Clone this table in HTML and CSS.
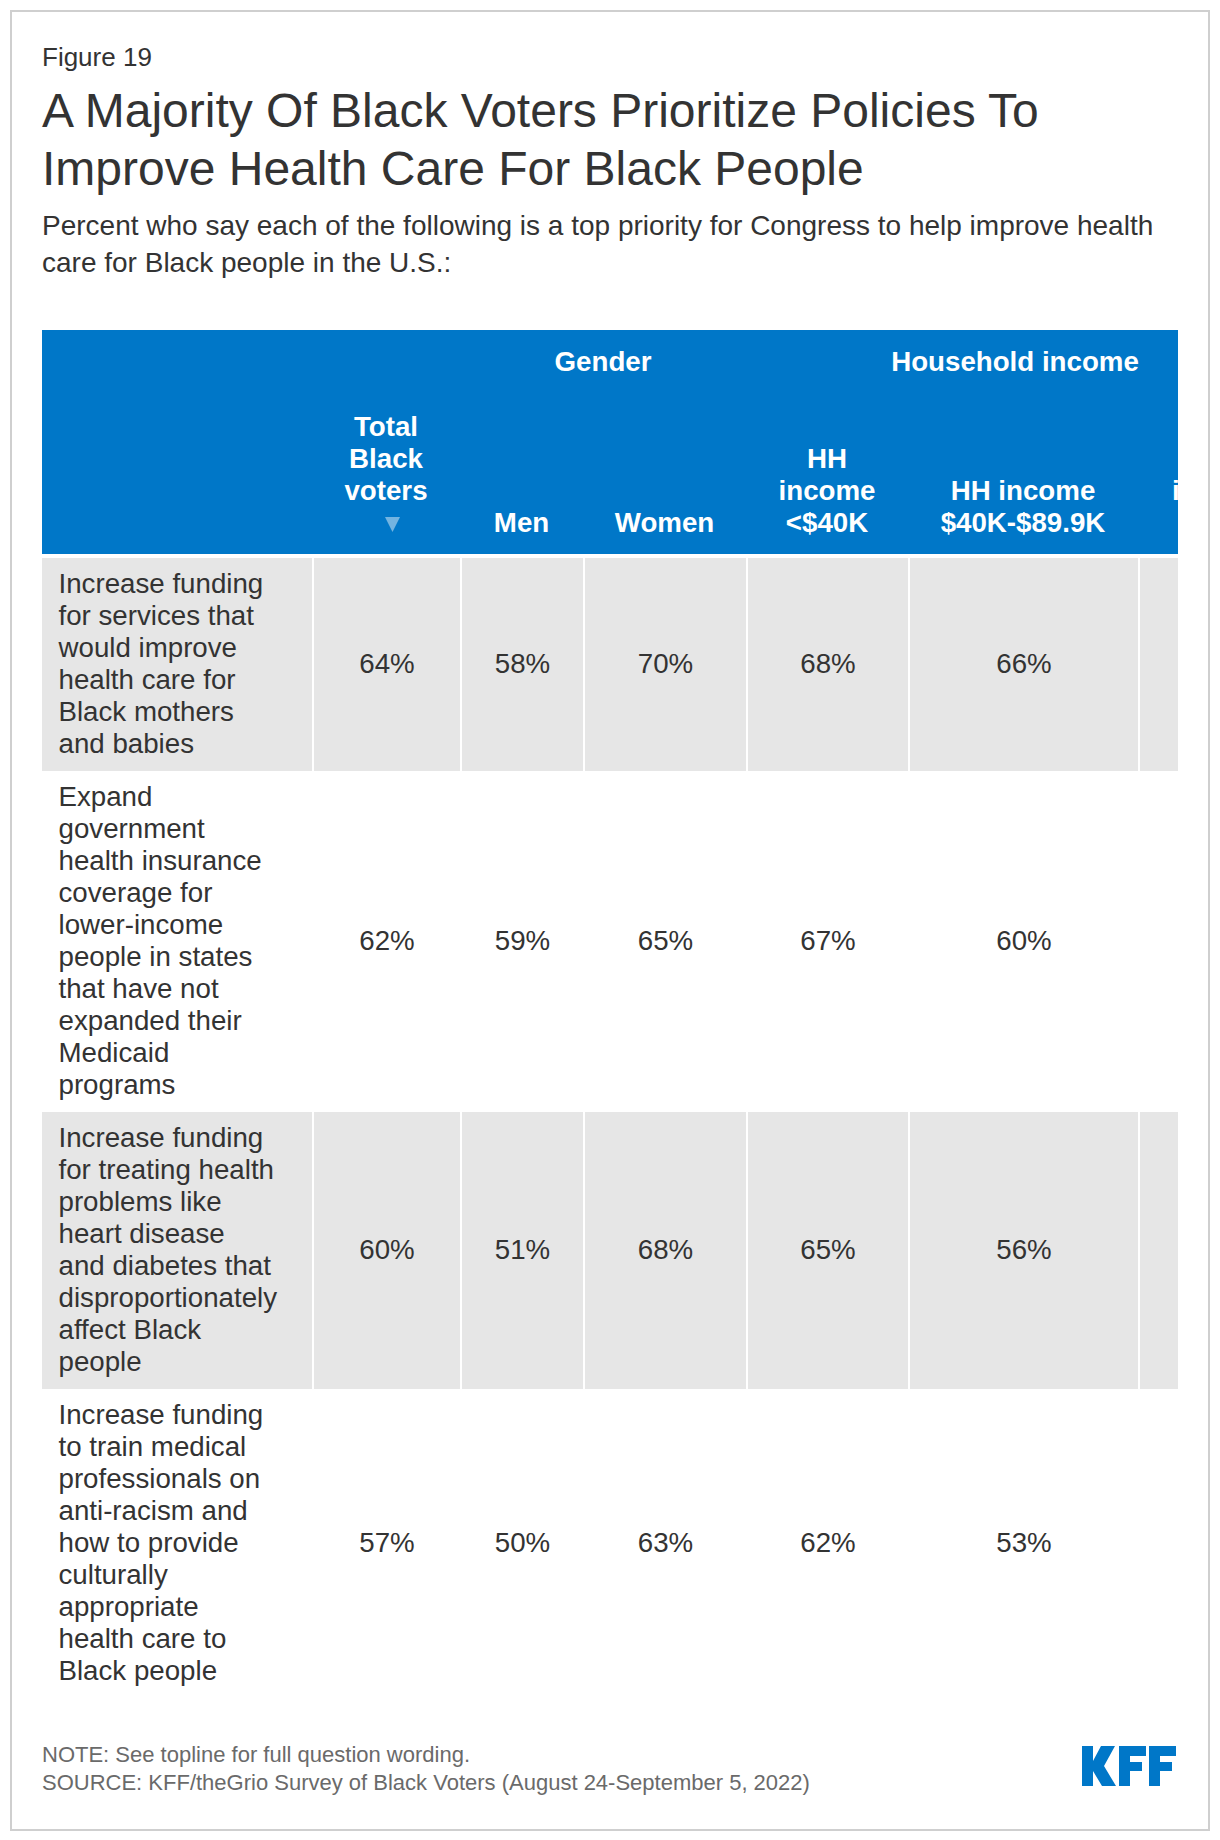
FILE: index.html
```html
<!DOCTYPE html>
<html lang="en">
<head>
<meta charset="utf-8">
<title>Figure 19 - KFF</title>
<link rel="stylesheet" href="styles.css">
</head>
<body>
<figure class="figure">
  <p class="fig-label">Figure 19</p>
  <h1 class="fig-title">A Majority Of Black Voters Prioritize Policies To Improve Health Care For Black People</h1>
  <p class="fig-subtitle">Percent who say each of the following is a top priority for Congress to help improve health care for Black people in the U.S.:</p>

  <div class="table-wrap">
    <table class="data-table">
      <colgroup>
        <col class="c-label">
        <col class="c-total">
        <col class="c-men">
        <col class="c-women">
        <col class="c-inc1">
        <col class="c-inc2">
        <col class="c-inc3">
      </colgroup>
      <thead>
        <tr class="group-row">
          <th colspan="2"></th>
          <th colspan="2">Gender</th>
          <th colspan="3" class="group-income">Household income</th>
        </tr>
        <tr class="col-row">
          <th></th>
          <th>Total Black voters<span class="sort-icon"><svg width="15" height="15" viewBox="0 0 15 15"><polygon points="0,0 15,0 7.5,15" fill="#ffffff" fill-opacity="0.45"/></svg></span></th>
          <th>Men</th>
          <th>Women</th>
          <th>HH income &lt;$40K</th>
          <th>HH income $40K-$89.9K</th>
          <th class="col-last">HH income $90K+</th>
        </tr>
      </thead>
      <tbody>
        <tr>
          <td class="label">Increase funding for services that would improve health care for Black mothers and babies</td>
          <td>64%</td><td>58%</td><td>70%</td><td>68%</td><td>66%</td><td></td>
        </tr>
        <tr>
          <td class="label">Expand government health insurance coverage for lower-income people in states that have not expanded their Medicaid programs</td>
          <td>62%</td><td>59%</td><td>65%</td><td>67%</td><td>60%</td><td></td>
        </tr>
        <tr>
          <td class="label">Increase funding for treating health problems like heart disease and diabetes that disproportionately affect Black people</td>
          <td>60%</td><td>51%</td><td>68%</td><td>65%</td><td>56%</td><td></td>
        </tr>
        <tr>
          <td class="label">Increase funding to train medical professionals on anti-racism and how to provide culturally appropriate health care to Black people</td>
          <td>57%</td><td>50%</td><td>63%</td><td>62%</td><td>53%</td><td></td>
        </tr>
      </tbody>
    </table>
  </div>

  <footer class="fig-footer">
    <div class="notes">
      <p>NOTE: See topline for full question wording.</p>
      <p>SOURCE: KFF/theGrio Survey of Black Voters (August 24-September 5, 2022)</p>
    </div>
    <svg class="kff-logo" viewBox="0 0 94 40" role="img" aria-label="KFF">
      <g fill="#0077c8">
        <rect x="0" y="0" width="11" height="40"/>
        <polygon points="11,15 19,0 33,0 22,20 34,40 20,40 11,25"/>
        <rect x="37" y="0" width="11" height="40"/>
        <rect x="37" y="0" width="27" height="10"/>
        <rect x="37" y="16" width="23" height="9"/>
        <rect x="67" y="0" width="11" height="40"/>
        <rect x="67" y="0" width="27" height="10"/>
        <rect x="67" y="16" width="23" height="9"/>
      </g>
    </svg>
  </footer>
</figure>
</body>
</html>
```

FILE: styles.css
```css
* {
  box-sizing: border-box;
}

body {
  margin: 10px;
  background: #ffffff;
  color: #333333;
  font-family: "Liberation Sans", Arial, sans-serif;
}

.figure {
  width: 1200px;
  margin: 0;
  border: 2px solid #cfcfcf;
  padding: 30px 30px 33px;
}

.fig-label {
  margin: 0;
  font-size: 26px;
  line-height: 30px;
  color: #333333;
}

.fig-title {
  margin: 10px 0 0;
  font-size: 48px;
  line-height: 58px;
  font-weight: normal;
  color: #333333;
}

.fig-subtitle {
  margin: 9px 0 0;
  font-size: 28px;
  line-height: 37px;
  color: #333333;
}

.table-wrap {
  margin-top: 49px;
  width: 1136px;
  overflow: hidden;
}

.data-table {
  width: 1253px;
  table-layout: fixed;
  border-collapse: separate;
  border-spacing: 0;
  background: #ffffff;
  font-size: 27.7px;
  line-height: 32px;
  color: #333333;
}

.c-label { width: 270px; }
.c-total { width: 148px; }
.c-men { width: 123px; }
.c-women { width: 163px; }
.c-inc1 { width: 162px; }
.c-inc2 { width: 230px; }
.c-inc3 { width: 157px; }

.data-table th {
  background: #0077c8;
  color: #ffffff;
  font-weight: bold;
  text-align: center;
  padding-left: 12px;
  padding-right: 12px;
}

.group-row th {
  padding-top: 16px;
  padding-bottom: 0;
  vertical-align: top;
}

.data-table th.group-income {
  padding-right: 23px;
}

.col-row th {
  padding-top: 33px;
  padding-bottom: 15px;
  vertical-align: bottom;
}

.data-table th.col-last {
  padding-left: 16px;
  padding-right: 8px;
}

.sort-icon {
  display: flex;
  justify-content: center;
  align-items: flex-start;
  height: 32px;
  padding-top: 10px;
  padding-left: 12px;
}

.data-table td {
  padding: 10px 8px 11px;
  text-align: center;
  vertical-align: middle;
  border-left: 2px solid #ffffff;
}

.data-table td.label {
  text-align: left;
  border-left: 0;
  padding: 10px 33.5px 11px 16.5px;
}

.data-table tbody tr:nth-child(odd) td {
  background: #e6e6e6;
}

.data-table tbody tr:first-child td {
  border-top: 4px solid #ffffff;
}

.fig-footer {
  margin-top: 43px;
  display: flex;
  justify-content: space-between;
  align-items: flex-start;
}

.notes {
  font-size: 22px;
  line-height: 27.5px;
  color: #6a6a6a;
}

.notes p {
  margin: 0;
}

.kff-logo {
  display: block;
  width: 94px;
  height: 40px;
  margin-top: 5px;
  margin-right: 2px;
}
```
